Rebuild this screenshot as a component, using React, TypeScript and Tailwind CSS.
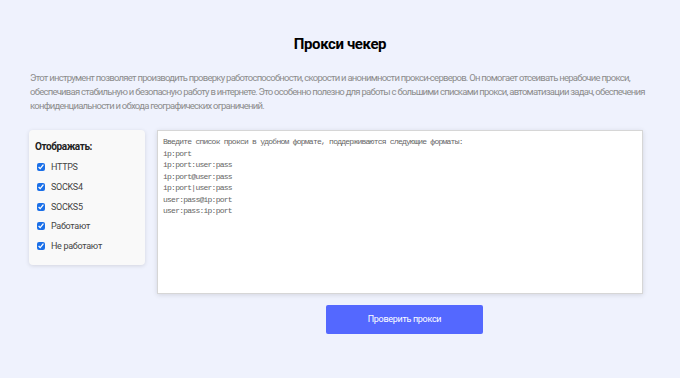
import { useState } from "react";

const filters = ["HTTPS", "SOCKS4", "SOCKS5", "Работают", "Не работают"];

const placeholder = `Введите список прокси в удобном формате, поддерживаются следующие форматы:
ip:port
ip:port:user:pass
ip:port@user:pass
ip:port|user:pass
user:pass@ip:port
user:pass:ip:port`;

export default function App() {
  const [checked, setChecked] = useState<boolean[]>(filters.map(() => true));

  return (
    <div className="min-h-[378px] w-full bg-[#eff2fd] px-[30px] pt-[34px] font-['Roboto',sans-serif]">
      <h1 className="text-center text-[15px] leading-[20px] font-bold tracking-[-0.4px] text-black">
        Прокси чекер
      </h1>
      <p className="mt-[17px] text-[9.5px] leading-[14px] tracking-[-0.75px] text-[#8c8c8c]">
        Этот инструмент позволяет производить проверку работоспособности, скорости и анонимности
        прокси-серверов. Он помогает отсеивать нерабочие прокси, обеспечивая стабильную и безопасную
        работу в интернете. Это особенно полезно для работы с большими списками прокси, автоматизации
        задач, обеспечения конфиденциальности и обхода географических ограничений.
      </p>

      <div className="mt-[17px] -ml-[1px] flex gap-[12px]">
        <div className="h-[135px] w-[116px] shrink-0 rounded-[4px] bg-[#f9f9f9] px-[6px] pt-[11px] shadow-[0_1px_4px_rgba(0,0,0,0.12)]">
          <div className="text-[10px] leading-[12px] font-bold tracking-[-0.4px] text-[#222]">
            Отображать:
          </div>
          <div className="mt-[8px] flex flex-col gap-[7.75px]">
            {filters.map((f, i) => (
              <label key={f} className="flex items-center gap-[6px] pl-[2px] text-[9px] leading-[12px] tracking-[-0.3px] text-[#444]">
                <input
                  type="checkbox"
                  checked={checked[i]}
                  onChange={() => setChecked(checked.map((c, j) => (j === i ? !c : c)))}
                  className="m-0 h-[8px] w-[8px] accent-[#1a6fe8]"
                />
                {f}
              </label>
            ))}
          </div>
        </div>

        <div className="flex flex-1 flex-col items-start">
          <textarea
            placeholder={placeholder}
            className="h-[164px] w-[486px] resize-none border border-[#d6d6d6] bg-white px-[5px] py-[5px] font-['Liberation_Mono',monospace] text-[8px] leading-[11.5px] tracking-[-0.75px] text-[#333] shadow-[0_1px_5px_rgba(0,0,0,0.12)] outline-none placeholder:text-[#666]"
          />
          <button className="mt-[11px] ml-[169px] h-[29px] w-[157px] rounded-[2px] bg-[#5468ff] text-[9px] tracking-[-0.3px] text-white">
            Проверить прокси
          </button>
        </div>
      </div>
    </div>
  );
}
